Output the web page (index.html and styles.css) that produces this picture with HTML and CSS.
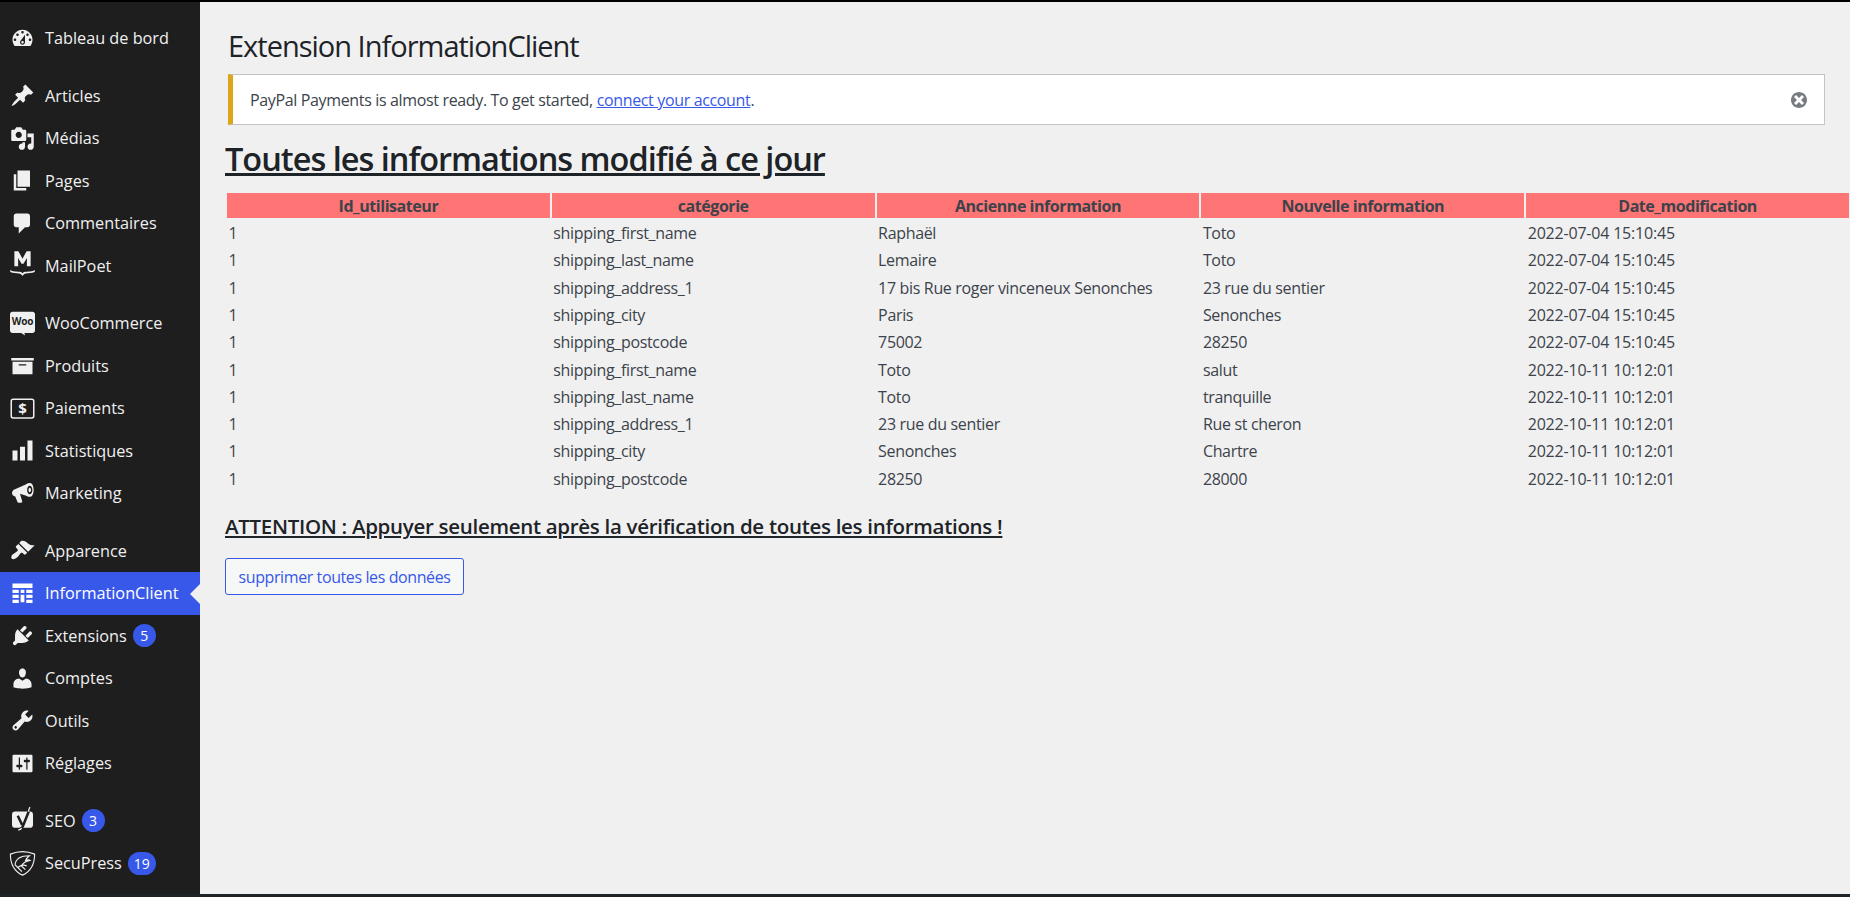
FILE: index.html
```html
<!DOCTYPE html>
<html lang="fr">

<head>
    <meta charset="utf-8">
    <title>Extension InformationClient</title>
    <link rel="stylesheet" href="styles.css">
</head>

<body>

<div class="admin">
    <nav class="sidebar">
        <ul class="menu">
            <li class="item"><svg class="icon" viewBox="0 0 20 20"><path d="M3.76 16h12.48c1.1-1.37 1.76-3.11 1.76-5 0-4.42-3.58-8-8-8s-8 3.58-8 8c0 1.89.66 3.63 1.76 5zM10 4c.55 0 1 .45 1 1s-.45 1-1 1-1-.45-1-1 .45-1 1-1zM6 6c.55 0 1 .45 1 1s-.45 1-1 1-1-.45-1-1 .45-1 1-1zm8 0c.55 0 1 .45 1 1s-.45 1-1 1-1-.45-1-1 .45-1 1-1zm-5.37 5.55L12 7v6c0 1.1-.9 2-2 2s-2-.9-2-2c0-.57.24-1.08.63-1.45zM4 10c.55 0 1 .45 1 1s-.45 1-1 1-1-.45-1-1 .45-1 1-1zm12 0c.55 0 1 .45 1 1s-.45 1-1 1-1-.45-1-1 .45-1 1-1zm-5 3c0-.55-.45-1-1-1s-1 .45-1 1 .45 1 1 1 1-.45 1-1z"/></svg>Tableau de bord</li>
            <li class="sep"></li>
            <li class="item"><svg class="icon" viewBox="0 0 20 20"><path d="M10.44 3.02l1.82-1.82 6.36 6.35-1.83 1.82c-1.05-.68-2.48-.57-3.41.36l-.75.75c-.92.93-1.04 2.35-.35 3.41l-1.83 1.82-2.41-2.41-2.8 2.79c-.42.42-3.38 2.71-3.8 2.29s1.86-3.39 2.28-3.81l2.79-2.79L4.1 9.36l1.83-1.82c1.05.69 2.48.57 3.4-.36l.75-.75c.93-.92 1.05-2.35.36-3.41z"/></svg>Articles</li>
            <li class="item"><svg class="icon" viewBox="0 0 20 20"><path d="M13 11V4c0-.55-.45-1-1-1h-1.67L9 1H5L3.67 3H2c-.55 0-1 .45-1 1v7c0 .55.45 1 1 1h10c.55 0 1-.45 1-1zM7 4.5c1.38 0 2.5 1.12 2.5 2.5S8.38 9.5 7 9.5 4.5 8.38 4.5 7 5.62 4.5 7 4.5zM14 6h5v10.5c0 1.38-1.12 2.5-2.5 2.5S14 17.88 14 16.5s1.12-2.5 2.5-2.5c.17 0 .34.02.5.05V9h-3V6zm-4 8.05V13h2v3.5c0 1.38-1.12 2.5-2.5 2.5S7 17.88 7 16.5 8.12 14 9.5 14c.17 0 .34.02.5.05z"/></svg>Médias</li>
            <li class="item"><svg class="icon" viewBox="0 0 20 20"><path d="M6 15V2h10v13H6zm-1 1h8v2H3V5h2v11z"/></svg>Pages</li>
            <li class="item"><svg class="icon" viewBox="0 0 20 20"><path d="M5 2h9c1.1 0 2 .9 2 2v7c0 1.1-.9 2-2 2h-2l-5 5v-5H5c-1.1 0-2-.9-2-2V4c0-1.1.9-2 2-2z"/></svg>Commentaires</li>
            <li class="item"><svg class="icon" viewBox="0 0 20 20"><path d="M3.5-1.5h3.2L10 4.5l3.3-6h3.2v12h-3V4l-2.7 4.5H9.2L6.500 4v6.500h-3zM0 13.500c2 1.500 6 1.200 8 1.500.9.100 1.500.5 2 1.200.5-.7 1.100-1.100 2-1.200 2-.3 6 0 8-1.500l-.3 1.700c-2 1-5 .8-7 1.100-1 .2-2 .9-2.700 2-.7-1.100-1.700-1.800-2.700-2-2-.3-5-.1-7-1.100z"/></svg>MailPoet</li>
            <li class="sep"></li>
            <li class="item"><svg class="icon" viewBox="0 0 20 20"><path d="M2 .5h16c1.100 0 2 .9 2 2v13c0 1.100-.9 2-2 2h-6.500l.5 2-3-2H2c-1.100 0-2-.9-2-2v-13c0-1.100.9-2 2-2z"/><text class="woo_text" x="10" y="11.500">Woo</text></svg>WooCommerce</li>
            <li class="item"><svg class="icon" viewBox="0 0 20 20"><path d="M19 4v2H1V4h18zM2 7h16v10H2V7zm11 3V9H7v1h6z"/></svg>Produits</li>
            <li class="item"><svg class="icon" viewBox="0 0 20 20"><rect class="pay_box" x="1" y="2.500" width="18" height="15" rx="1.500"/><text class="pay_text" x="10" y="14.500">$</text></svg>Paiements</li>
            <li class="item"><svg class="icon" viewBox="0 0 20 20"><path d="M18 18V2h-4v16h4zm-6 0V7H8v11h4zm-6 0v-8H2v8h4z"/></svg>Statistiques</li>
            <li class="item"><svg class="icon" viewBox="0 0 20 20"><path fill-rule="evenodd" d="M1.600 9.500c0-1.500 1-2.500 2.400-3l9-4c1-.8 2-.9 3-.9 1.800 0 2.900 2.500 2.900 5.500s-1.100 5.500-2.900 5.500c-1 0-2-.2-3-.9l-5-1.500 1.700 5.800c.2.700-.2 1.300-.8 1.300H6.900c-.5 0-.9-.3-1-.8L4.200 12.300c-1.600-.2-2.600-1.300-2.600-2.800zM15.800 3.700c-1.200 0-2.100 1.500-2.100 3.400s.9 3.400 2.100 3.400 2.100-1.500 2.100-3.400-.9-3.400-2.100-3.400zM15.800 5.300c-.6 0-1 .8-1 1.800s.4 1.800 1 1.800 1-.8 1-1.800-.4-1.800-1-1.800z"/></svg>Marketing</li>
            <li class="sep"></li>
            <li class="item"><svg class="icon" viewBox="0 0 20 20"><path d="M14.48 11.06L7.41 3.99l1.5-1.5c.5-.56 2.3-.47 3.51.32 1.21.8 1.43 1.28 2.91 2.1 1.18.64 2.45 1.26 4.45.85zm-.71.71L6.7 4.7 4.93 6.47c-.39.39-.39 1.02 0 1.41l1.06 1.06c.39.39.39 1.03 0 1.42-.6.6-1.43 1.11-2.21 1.69-.35.26-.7.53-1.01.84C1.43 13.23.57 15.5 1.43 16.57c1.07.86 3.34 0 4.68-1.34.31-.31.58-.66.84-1.01.58-.78 1.09-1.61 1.69-2.21.39-.39 1.03-.39 1.42 0l1.06 1.06c.39.39 1.02.39 1.41 0z"/></svg>Apparence</li>
            <li class="item active"><svg class="icon" viewBox="0 0 20 20"><path d="M2 2h16v3.500H2zM2 7h5v2.500H2zM8.500 7h3v2.500h-3zM13 7h5v2.500h-5zM2 11h5v2.500H2zM8.500 11h3v6h-3zM13 11h5v2.500h-5zM2 15h5v2.500H2zM13 15h5v2.500h-5z"/></svg>InformationClient</li>
            <li class="item"><svg class="icon" viewBox="0 0 20 20"><path d="M13.11 4.36L9.87 7.6 8 5.73l3.24-3.24c.35-.34 1.05-.2 1.56.32.52.51.66 1.21.31 1.55zm-8 1.77l.91-1.12 9.01 9.01-1.19.84c-.71.71-2.63 1.16-3.82 1.16H6.14L4.9 17.26c-.59.59-1.54.59-2.12 0-.59-.58-.59-1.53 0-2.12l1.24-1.24v-3.88c0-1.13.4-3.19 1.09-3.89zm7.26 3.97l3.24-3.24c.34-.35 1.04-.21 1.55.31.52.51.66 1.21.31 1.55l-3.24 3.25z"/></svg>Extensions<span class="badge">5</span></li>
            <li class="item"><svg class="icon" viewBox="0 0 20 20"><path d="M10 9.25c-2.27 0-2.73-3.44-2.73-3.44C7 4.02 7.82 2 9.97 2c2.16 0 2.98 2.02 2.71 3.81 0 0-.41 3.44-2.68 3.44zm0 2.57L12.72 10c2.39 0 4.52 2.33 4.52 4.53v2.49s-3.65 1.13-7.24 1.13c-3.65 0-7.24-1.13-7.24-1.13v-2.49c0-2.25 1.94-4.48 4.47-4.48z"/></svg>Comptes</li>
            <li class="item"><svg class="icon" viewBox="0 0 20 20"><path d="M16.68 9.77c-1.34 1.34-3.3 1.67-4.95.99l-5.41 6.52c-.99.99-2.59.99-3.58 0s-.99-2.59 0-3.57l6.52-5.42c-.68-1.65-.35-3.61.99-4.95 1.28-1.28 3.12-1.62 4.72-1.06l-2.89 2.89 2.82 2.82 2.86-2.87c.53 1.58.18 3.39-1.08 4.65zM3.81 16.21c.4.39 1.04.39 1.43 0 .4-.4.4-1.04 0-1.43-.39-.4-1.03-.4-1.43 0-.39.39-.39 1.03 0 1.43z"/></svg>Outils</li>
            <li class="item"><svg class="icon" viewBox="0 0 20 20"><path d="M18 16V4c0-.55-.45-1-1-1H3c-.55 0-1 .45-1 1v12c0 .55.45 1 1 1h14c.55 0 1-.45 1-1zM8 11h1c.55 0 1 .45 1 1s-.45 1-1 1H8v1.5c0 .28-.22.5-.5.5s-.5-.22-.5-.5V13H6c-.55 0-1-.45-1-1s.45-1 1-1h1V5.5c0-.28.22-.5.5-.5s.5.22.5.5V11zm5-2h-1c-.55 0-1-.45-1-1s.45-1 1-1h1V5.5c0-.28.22-.5.5-.5s.5.22.5.5V7h1c.55 0 1 .45 1 1s-.45 1-1 1h-1v5.500c0 .28-.22.5-.5.5s-.5-.22-.5-.5V9z"/></svg>Réglages</li>
            <li class="sep"></li>
            <li class="item"><svg class="icon" viewBox="0 0 20 20"><rect x="1.600" y="2.800" width="16.800" height="13" rx="2.500"/><path class="yoast_y" d="M6.200 6.200l3.500 7.300M15 2.800L10.200 14.800c-.7 1.500-2 2.200-3.200 2.400"/><path class="yoast_tail" d="M14.600 2.800L15.900-.8"/><path class="yoast_tail" d="M9.400 16.200c-.8.8-1.600 1.200-2.800 1.500"/></svg>SEO<span class="badge">3</span></li>
            <li class="item"><svg class="icon icon-line" viewBox="0 0 20 20"><path d="M.3 2.500C3.500 1.200 6.500.5 10 .5s6.500.7 9.700 2c0 8-2.700 13.500-9.700 16.800C3 16 .3 10.500.3 2.500zM4 11C4.500 7 8 3.800 15.500 3.800 14 5 13 6 12.500 7.500c1.500-.5 3-.3 3.500 0-3 .5-5.500 2-7 4.500M4 11l5.500 5.500M6.500 13c2-1.500 5-2 7-1M9 12c1.500 1 2.500 2 3.300 3"/></svg>SecuPress<span class="badge">19</span></li>
        </ul>
    </nav>

    <main class="content">
        <h1 class="page_title">Extension InformationClient</h1>
        <div class="notice">
            <p>PayPal Payments is almost ready. To get started, <a href="#">connect your account</a>.</p>
            <svg class="dismiss" viewBox="0 0 20 20"><path d="M10 2c4.420 0 8 3.580 8 8s-3.580 8-8 8-8-3.580-8-8 3.580-8 8-8zm5 11l-3-3 3-3-2-2-3 3-3-3-2 2 3 3-3 3 2 2 3-3 3 3z"/></svg>
        </div>
        <h2 class="heading">Toutes les informations modifié à ce jour</h2>
        <table class="changes">
            <thead>
                <tr><th>Id_utilisateur</th><th>catégorie</th><th>Ancienne information</th><th>Nouvelle information</th><th>Date_modification</th></tr>
            </thead>
            <tbody>
                <tr><td>1</td><td>shipping_first_name</td><td>Raphaël</td><td>Toto</td><td>2022-07-04 15:10:45</td></tr>
                <tr><td>1</td><td>shipping_last_name</td><td>Lemaire</td><td>Toto</td><td>2022-07-04 15:10:45</td></tr>
                <tr><td>1</td><td>shipping_address_1</td><td>17 bis Rue roger vinceneux Senonches</td><td>23 rue du sentier</td><td>2022-07-04 15:10:45</td></tr>
                <tr><td>1</td><td>shipping_city</td><td>Paris</td><td>Senonches</td><td>2022-07-04 15:10:45</td></tr>
                <tr><td>1</td><td>shipping_postcode</td><td>75002</td><td>28250</td><td>2022-07-04 15:10:45</td></tr>
                <tr><td>1</td><td>shipping_first_name</td><td>Toto</td><td>salut</td><td>2022-10-11 10:12:01</td></tr>
                <tr><td>1</td><td>shipping_last_name</td><td>Toto</td><td>tranquille</td><td>2022-10-11 10:12:01</td></tr>
                <tr><td>1</td><td>shipping_address_1</td><td>23 rue du sentier</td><td>Rue st cheron</td><td>2022-10-11 10:12:01</td></tr>
                <tr><td>1</td><td>shipping_city</td><td>Senonches</td><td>Chartre</td><td>2022-10-11 10:12:01</td></tr>
                <tr><td>1</td><td>shipping_postcode</td><td>28250</td><td>28000</td><td>2022-10-11 10:12:01</td></tr>
            </tbody>
        </table>
        <h3 class="warning">ATTENTION : Appuyer seulement après la vérification de toutes les informations !</h3>
        <button class="delete_btn">supprimer toutes les données</button>
    </main>
</div>

</body>

</html>
```

FILE: styles.css
```css
* {
    margin: 0;
    padding: 0;
    box-sizing: border-box;
}

html, body {
    height: 897px;
    overflow: hidden;
}

body {
    background-color: #1d2327;
    font-family: "Open Sans", "Noto Sans", sans-serif;
    font-size: 16px;
    color: #3c434a;
}

.admin {
    display: flex;
    height: 894px;
    background-color: #000;
    padding-top: 2px;
}

.sidebar {
    flex: 0 0 200px;
    background-color: #1e1e1e;
    padding-top: 15px;
}

.menu {
    list-style: none;
}

.item {
    display: flex;
    align-items: center;
    position: relative;
    height: 42.5px;
    padding-left: 10px;
    font-size: 16.25px;
    color: #f0f0f1;
}

.sep {
    height: 15px;
}

.item.active {
    background-color: #3858e9;
    color: #fff;
}

.item.active::after {
    content: "";
    position: absolute;
    right: 0;
    top: 12px;
    border: 10px solid transparent;
    border-left-width: 0;
    border-right-color: #f0f0f1;
}

.icon {
    flex: 0 0 25px;
    width: 25px;
    height: 25px;
    margin-right: 10px;
    fill: #f0f0f1;
    overflow: visible;
}

.active .icon {
    fill: #fff;
}

.icon-line {
    fill: none;
    stroke: #f0f0f1;
    stroke-width: 0.9;
}

.woo_text {
    fill: #1e1e1e;
    font-size: 8px;
    font-weight: 700;
    letter-spacing: -0.2px;
    text-anchor: middle;
}

.pay_box {
    fill: none;
    stroke: #f0f0f1;
    stroke-width: 1.2;
}

.pay_text {
    fill: #f0f0f1;
    font-size: 12px;
    font-weight: 700;
    text-anchor: middle;
}

.yoast_y {
    fill: none;
    stroke: #1e1e1e;
    stroke-width: 2;
}

.yoast_tail {
    fill: none;
    stroke: #f0f0f1;
    stroke-width: 1;
}

.badge {
    min-width: 23px;
    height: 23px;
    margin-left: 6px;
    padding: 0 6px;
    border-radius: 12px;
    background-color: #3858e9;
    color: #fff;
    font-size: 14px;
    line-height: 23px;
    text-align: center;
}

.content {
    flex: 1;
    min-width: 0;
    background-color: #f0f0f1;
    padding: 0 0 0 25px;
}

.page_title {
    margin: 24px 0 0 3px;
    font-size: 29px;
    line-height: 40px;
    font-weight: 400;
    letter-spacing: -1px;
    color: #1d2327;
}

.notice {
    display: flex;
    align-items: center;
    justify-content: space-between;
    width: 1597px;
    height: 51px;
    margin: 8px 0 0 3px;
    padding: 0 15px 0 17px;
    background-color: #fff;
    border: 1px solid #c3c4c7;
    border-left: 5px solid #dba617;
}

.notice p {
    font-size: 16px;
    letter-spacing: -0.35px;
}

.notice a {
    color: #3858e9;
}

.dismiss {
    width: 20px;
    height: 20px;
    fill: #787c82;
}

.heading {
    margin-top: 12px;
    font-size: 32.5px;
    line-height: 44px;
    font-weight: 600;
    letter-spacing: -1px;
    color: #1d2327;
    text-decoration: underline;
}

.changes {
    width: 1626px;
    margin-top: 10px;
    table-layout: fixed;
    border-spacing: 2px;
    font-size: 16px;
    letter-spacing: -0.33px;
}

.changes th {
    height: 25.4px;
    background-color: #ff7575;
    font-weight: 700;
    letter-spacing: -0.45px;
    text-align: center;
}

.changes td {
    height: 25.3px;
    padding: 0 1.5px;
}

.changes td:last-child {
    letter-spacing: -0.2px;
}

.warning {
    margin-top: 19px;
    font-size: 20.5px;
    line-height: 28px;
    font-weight: 600;
    letter-spacing: -0.3px;
    color: #1d2327;
    text-decoration: underline;
}

.delete_btn {
    display: block;
    width: 239px;
    height: 37px;
    margin-top: 18px;
    background-color: #f6f7f7;
    border: 1px solid #3858e9;
    border-radius: 3px;
    color: #3858e9;
    font-family: inherit;
    font-size: 16px;
    letter-spacing: -0.4px;
}
```
